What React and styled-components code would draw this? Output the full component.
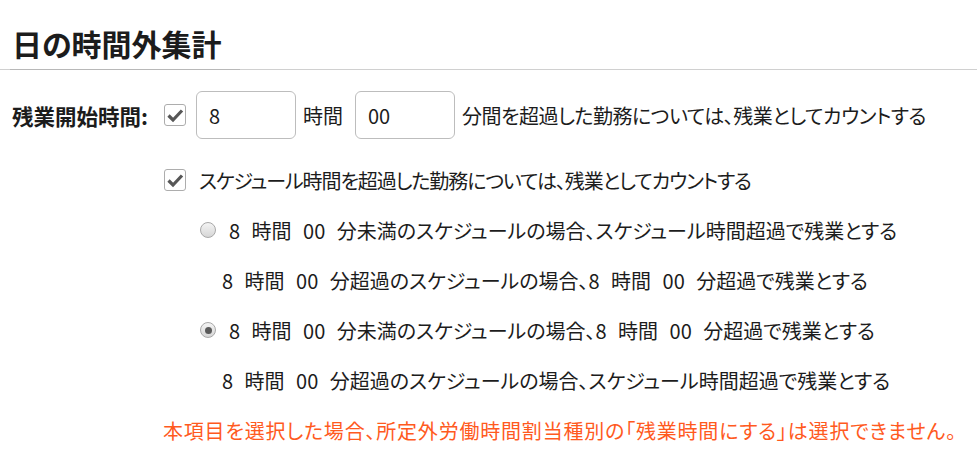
import styled, { createGlobalStyle } from 'styled-components';

const GlobalStyle = createGlobalStyle`
  body {
    margin: 0;
    background: #fff;
    color: #1c1c1c;
    font-family: "Noto Sans CJK JP", "Noto Sans", sans-serif;
    font-feature-settings: "palt";
  }
`;

// Section heading with its rule
const Header = styled.div`
  border-bottom: 1px solid #d0d0d0;
`;
const Title = styled.h2`
  display: inline-block;
  margin: 0 0 -1px 10px;
  padding: 22px 16px 4px 2px;
  width: 212px;
  font-size: 30px;
  line-height: 43px;
  font-weight: 700;
  border-bottom: 1px solid #b8b8b8;
`;

const Form = styled.div`
  padding-top: 21px;
  font-size: 20px;
`;

const StartRow = styled.div`
  display: flex;
  align-items: center;
  height: 48px;
`;
const Label = styled.span`
  width: 164px;
  padding-left: 12px;
  box-sizing: border-box;
  font-weight: 700;
  font-size: 21.5px;
`;
const NumberBox = styled.input`
  width: 100px;
  height: 48px;
  box-sizing: border-box;
  border: 1px solid #bdbdbd;
  border-radius: 6px;
  padding: 0 12px;
  font: inherit;
  font-size: 20px;
  color: #1c1c1c;
  outline: none;
`;
const Unit = styled.span`
  margin: 0 12px 0 7px;
  letter-spacing: ${p => p.$track || 0}px;
  white-space: nowrap;
`;

const Line = styled.div`
  display: flex;
  align-items: center;
  height: 50px;
  padding-left: ${p => p.$indent}px;
  margin-top: ${p => p.$top || 0}px;
  letter-spacing: ${p => p.$track || 0}px;
  word-spacing: 7px;
  white-space: pre;
  color: ${p => (p.$warn ? '#ff5a1e' : 'inherit')};
`;

const Box = styled.span`
  display: inline-flex;
  align-items: center;
  justify-content: center;
  width: 22px;
  height: 22px;
  box-sizing: border-box;
  border: 1px solid #adadad;
  border-radius: 3px;
  background: #fff;
  margin-right: ${p => p.$gap}px;
  flex: none;
`;

const Radio = styled.span`
  display: inline-flex;
  align-items: center;
  justify-content: center;
  width: 16px;
  height: 16px;
  box-sizing: border-box;
  border-radius: 50%;
  border: 1px solid #a8a8a8;
  background: linear-gradient(#f4f4f4, #d6d6d6);
  margin-right: 13px;
  flex: none;

  &::after {
    content: '';
    display: ${p => (p.$on ? 'block' : 'none')};
    width: 7px;
    height: 7px;
    border-radius: 50%;
    background: #5a5a5a;
  }
`;

function Check({ gap }) {
  return (
    <Box $gap={gap}>
      <svg width="18" height="16" viewBox="0 0 18 16">
        <path d="M2.5 8.5 L7 13 L16 3.5" fill="none" stroke="#575757" strokeWidth="3.2" />
      </svg>
    </Box>
  );
}

export default function App() {
  return (
    <>
      <GlobalStyle />
      <Header>
        <Title>日の時間外集計</Title>
      </Header>
      <Form>
        <StartRow>
          <Label>残業開始時間:</Label>
          <Check gap={10} />
          <NumberBox defaultValue="8" />
          <Unit>時間</Unit>
          <NumberBox defaultValue="00" />
          <Unit $track={-0.5}>分間を超過した勤務については、残業としてカウントする</Unit>
        </StartRow>
        <Line $indent={164} $top={16} $track={-1.1}>
          <Check gap={13} />
          スケジュール時間を超過した勤務については、残業としてカウントする
        </Line>
        <Line $indent={200}>
          <Radio />
          8 時間 00 分未満のスケジュールの場合、スケジュール時間超過で残業とする
        </Line>
        <Line $indent={222}>8 時間 00 分超過のスケジュールの場合、8 時間 00 分超過で残業とする</Line>
        <Line $indent={200}>
          <Radio $on />
          8 時間 00 分未満のスケジュールの場合、8 時間 00 分超過で残業とする
        </Line>
        <Line $indent={222}>8 時間 00 分超過のスケジュールの場合、スケジュール時間超過で残業とする</Line>
        <Line $indent={163} $track={0.8} $warn>
          本項目を選択した場合、所定外労働時間割当種別の「残業時間にする」は選択できません。
        </Line>
      </Form>
    </>
  );
}
